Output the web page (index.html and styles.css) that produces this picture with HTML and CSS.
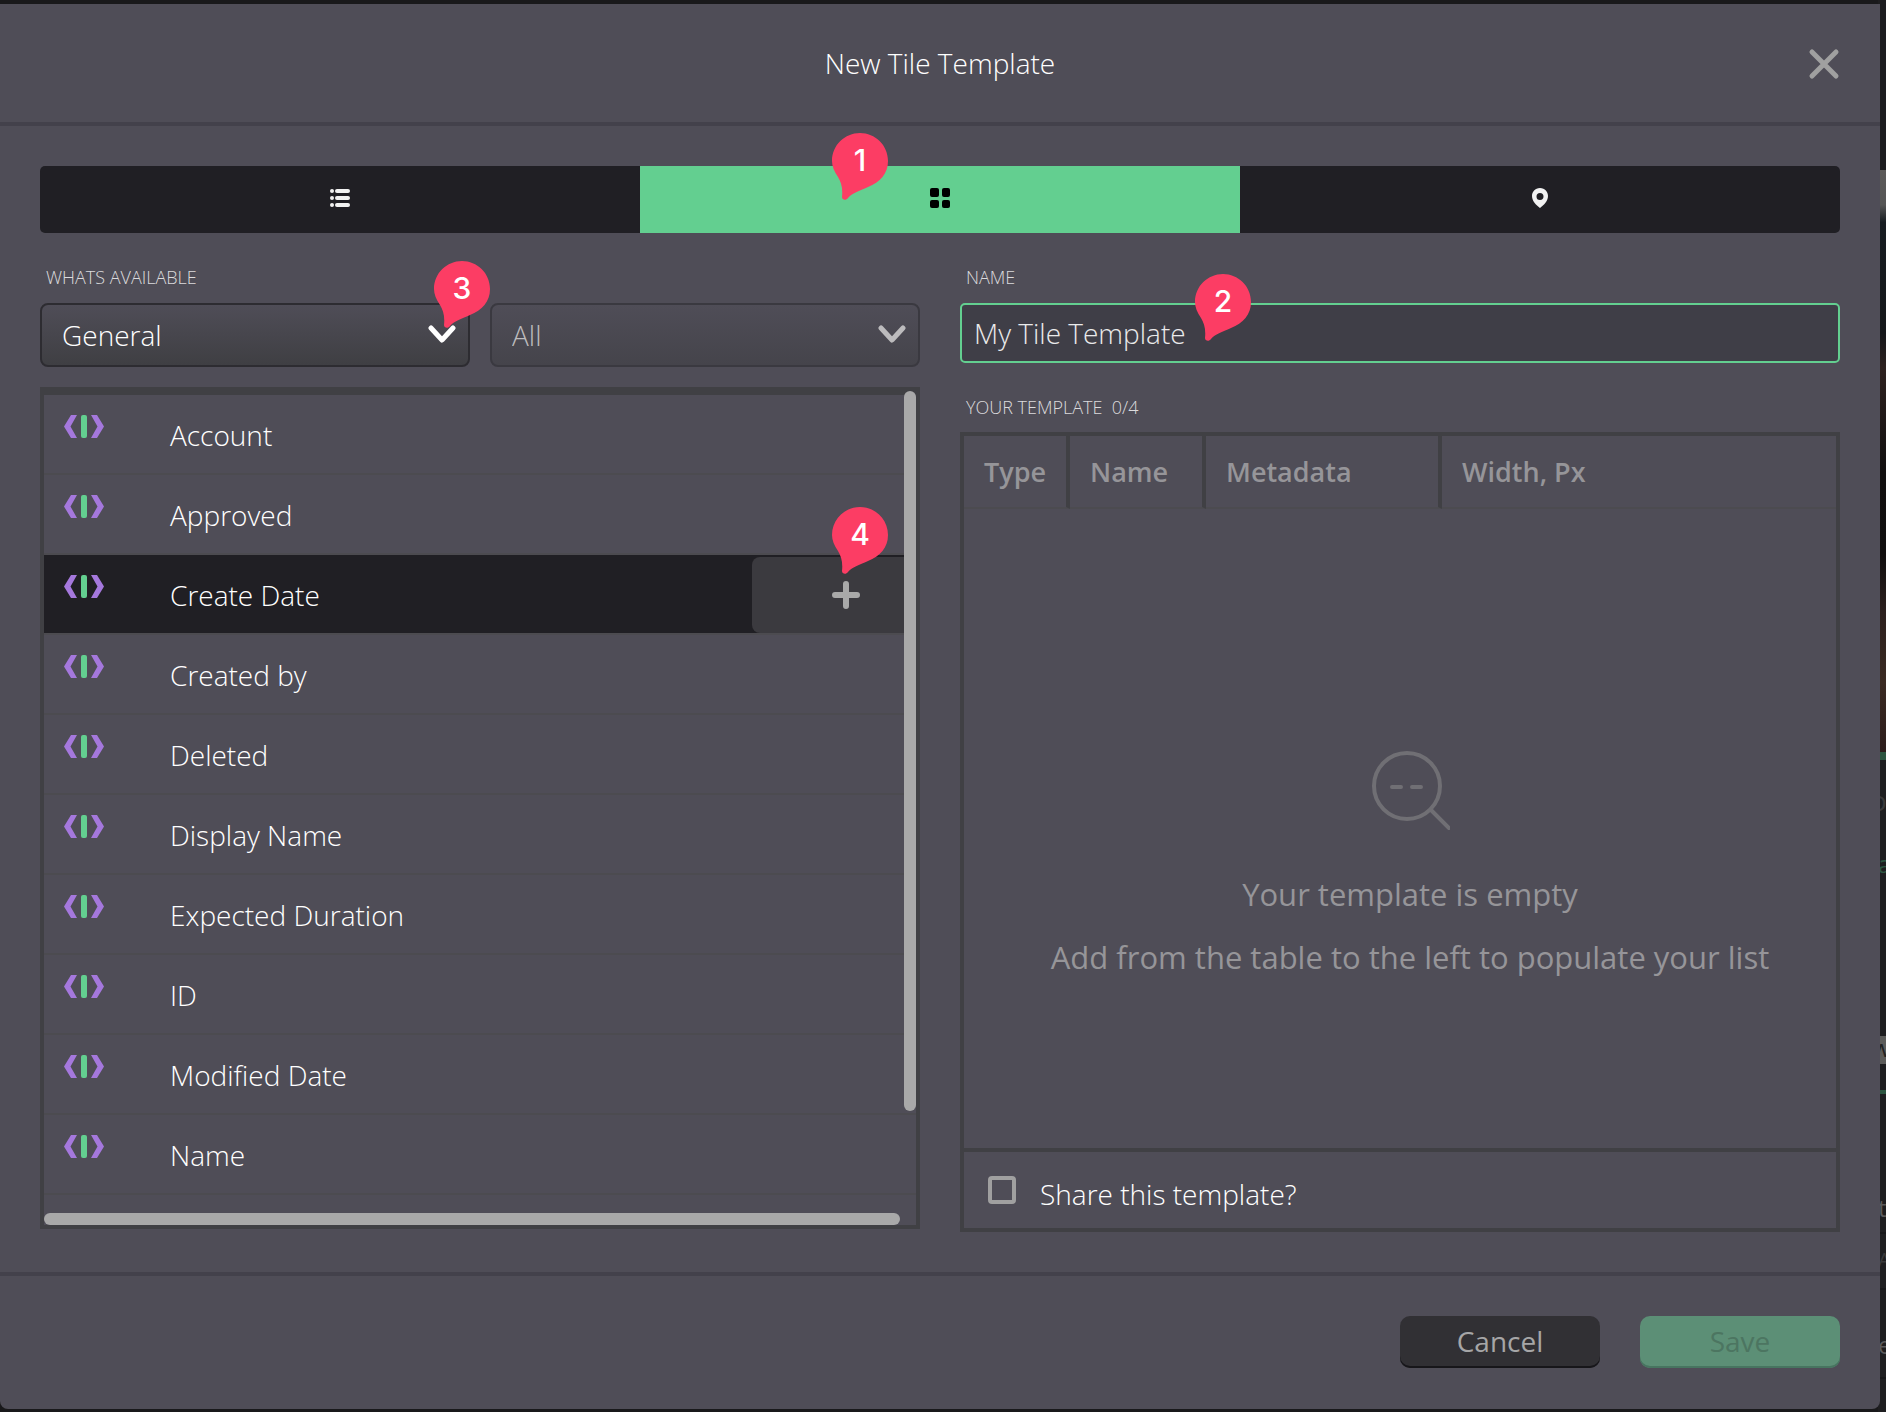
FILE: index.html
```
<!DOCTYPE html>
<html lang="en">
<head>
    <meta charset="utf-8">
    <title>New Tile Template</title>
    <link rel="stylesheet" href="styles.css">
</head>
<body>
    <!-- icons and callout shape used more than once -->
    <svg width="0" height="0" class="defs">
        <symbol id="icon-field" viewBox="0 0 40 23">
            <path d="M7 0h6L6.500 11.500 13 23H7L0 11.500z" fill="#a578dd"/>
            <path d="M33 0h-6l6.500 11.500L27 23h6l7-11.500z" fill="#a578dd"/>
            <rect x="17" y="0" width="6" height="23" rx="2" fill="#63cf90"/>
        </symbol>
        <symbol id="icon-chevron" viewBox="0 0 28 19">
            <path d="M3 3l11 12L25 3" fill="none" stroke="currentColor" stroke-width="5" stroke-linecap="round" stroke-linejoin="round"/>
        </symbol>
        <symbol id="callout" viewBox="0 0 56 67">
            <path d="M28 0C43 0 56 12 56 28c0 13-8 21-20 26-9 4-16 6-20 11-2 3-6 2-6-1 1-9-1-15-4-20C2 38 0 33 0 28 0 12 13 0 28 0z" fill="#fc3d64"/>
        </symbol>
    </svg>

    <!-- page behind the dialog -->
    <div class="backdrop" aria-hidden="true">
        <div class="backdrop-bar"></div>
        <div class="backdrop-photo"></div>
        <div class="backdrop-title">o</div>
        <div class="backdrop-link">a</div>
        <div class="backdrop-tab">w</div>
        <div class="backdrop-row first">t</div>
        <div class="backdrop-row head">A</div>
        <div class="backdrop-row">e</div>
    </div>

    <div class="modal">
        <header class="modal-header">
            <h1>New Tile Template</h1>
            <button type="button" class="close" aria-label="Close">
                <svg width="32" height="32" viewBox="0 0 32 32"><path d="M4 4l24 24M28 4L4 28" stroke="#a0a0a0" stroke-width="5" stroke-linecap="round"/></svg>
            </button>
        </header>

        <form class="modal-body" id="template-form">
            <div class="tabs">
                <button type="button" class="tab" aria-label="List">
                    <svg width="20" height="18" viewBox="0 0 20 18" fill="#f2f2f2">
                        <circle cx="2" cy="2" r="2"/><rect x="5" y="0" width="15" height="4" rx="2"/>
                        <circle cx="2" cy="9" r="2"/><rect x="5" y="7" width="15" height="4" rx="2"/>
                        <circle cx="2" cy="16" r="2"/><rect x="5" y="14" width="15" height="4" rx="2"/>
                    </svg>
                </button>
                <button type="button" class="tab active" aria-label="Tile">
                    <svg width="20" height="20" viewBox="0 0 20 20">
                        <rect width="9" height="9" rx="2"/><rect x="12" width="8" height="9" rx="2"/>
                        <rect y="12" width="9" height="8" rx="2"/><rect x="12" y="12" width="8" height="8" rx="2"/>
                    </svg>
                    <span class="callout callout-tab"><svg><use href="#callout"/></svg><b>1</b></span>
                </button>
                <button type="button" class="tab" aria-label="Map">
                    <svg width="18" height="20" viewBox="0 0 18 20">
                        <path fill="#f2f2f2" fill-rule="evenodd" d="M9 0c5 0 8 4 8 8 0 5-4 9-8 12C5 17 1 13 1 8c0-4 3-8 8-8zm0 5a3 3 0 1 0 0 7 3 3 0 0 0 0-7z"/>
                    </svg>
                </button>
            </div>

            <div class="columns">
                <section class="available">
                    <label class="caption" for="category">WHATS AVAILABLE</label>
                    <div class="filters">
                        <div class="select">
                            <select id="category"><option>General</option></select>
                            <svg class="chevron"><use href="#icon-chevron"/></svg>
                            <span class="callout callout-select"><svg><use href="#callout"/></svg><b>3</b></span>
                        </div>
                        <div class="select muted">
                            <select aria-label="Type"><option>All</option></select>
                            <svg class="chevron"><use href="#icon-chevron"/></svg>
                        </div>
                    </div>
                    <div class="field-box">
                        <ul class="fields">
                            <li><svg><use href="#icon-field"/></svg><span>Account</span></li>
                            <li><svg><use href="#icon-field"/></svg><span>Approved</span></li>
                            <li class="selected">
                                <svg><use href="#icon-field"/></svg><span>Create Date</span>
                                <button type="button" class="add" aria-label="Add Create Date">
                                    <svg viewBox="0 0 28 28"><path d="M14 3v22M3 14h22" stroke="#a9a9a9" stroke-width="6" stroke-linecap="round"/></svg>
                                    <span class="callout callout-add"><svg><use href="#callout"/></svg><b>4</b></span>
                                </button>
                            </li>
                            <li><svg><use href="#icon-field"/></svg><span>Created by</span></li>
                            <li><svg><use href="#icon-field"/></svg><span>Deleted</span></li>
                            <li><svg><use href="#icon-field"/></svg><span>Display Name</span></li>
                            <li><svg><use href="#icon-field"/></svg><span>Expected Duration</span></li>
                            <li><svg><use href="#icon-field"/></svg><span>ID</span></li>
                            <li><svg><use href="#icon-field"/></svg><span>Modified Date</span></li>
                            <li><svg><use href="#icon-field"/></svg><span>Name</span></li>
                        </ul>
                        <div class="scroll-y"></div>
                        <div class="scroll-x"></div>
                    </div>
                </section>

                <section class="template">
                    <label class="caption" for="name">NAME</label>
                    <div class="name-field">
                        <input type="text" id="name" name="name" value="My Tile Template">
                        <span class="callout callout-name"><svg><use href="#callout"/></svg><b>2</b></span>
                    </div>
                    <h2 class="caption">YOUR TEMPLATE&nbsp; 0/4</h2>
                    <div class="template-box">
                        <table>
                            <thead>
                                <tr>
                                    <th class="col-type">Type</th>
                                    <th class="col-name">Name</th>
                                    <th class="col-meta">Metadata</th>
                                    <th>Width, Px</th>
                                </tr>
                            </thead>
                        </table>
                        <div class="empty">
                            <svg width="80" height="80" viewBox="-2 0 80 80" fill="none" stroke="#706f74" stroke-width="4" stroke-linecap="round">
                                <circle cx="35" cy="35" r="33"/>
                                <path d="M59 59l18 18M20 36h9M40 36h9"/>
                            </svg>
                            <p>Your template is empty</p>
                            <p>Add from the table to the left to populate your list</p>
                        </div>
                        <div class="share">
                            <input type="checkbox" id="share" name="share">
                            <label for="share">Share this template?</label>
                        </div>
                    </div>
                </section>
            </div>
        </form>

        <footer class="modal-footer">
            <button type="button" class="btn btn-cancel">Cancel</button>
            <button type="submit" form="template-form" class="btn btn-save" disabled>Save</button>
        </footer>
    </div>
</body>
</html>
```
FILE: styles.css
```
* {
    box-sizing: border-box;
}
html, body {
    height: 100%;
}
body {
    margin: 0;
    padding: 4px 6px 3px 0;
    background: #19191b;
    color: #fff;
    font-family: "Open Sans", sans-serif;
    font-size: 28px;
    font-weight: 300;
    overflow: hidden;
}
button, input, select {
    font: inherit;
    color: inherit;
}
button {
    border: none;
    cursor: pointer;
}
.defs {
    position: absolute;
}

/* page behind the dialog */
.backdrop {
    position: absolute;
    top: 0;
    right: 0;
    width: 8px;
    height: 100%;
    display: flex;
    flex-direction: column;
    overflow: hidden;
    background: #1e1e20;
    color: #5a5a5b;
    font-size: 24px;
    font-weight: 400;
}
.backdrop-bar {
    height: 170px;
    background: #1d1d1f;
}
.backdrop-photo {
    height: 590px;
    background: linear-gradient(#5c5a59 0, #555 6%, #171c21 9%, #15171a 28%, #2d211f 34%, #110f0f 52%, #100e0e 66%, #2c201e 76%, #3a2a22 88%, #2c1c1b 100%);
    border-bottom: 8px solid #2c5540;
}
.backdrop-title {
    margin-left: -8px;
    height: 76px;
    line-height: 80px;
    font-size: 28px;
    color: #39393a;
}
.backdrop-link {
    height: 200px;
    line-height: 56px;
    color: #2c5540;
}
.backdrop-tab {
    height: 28px;
    line-height: 24px;
    margin-left: -6px;
    background: #5c5c5a;
    color: #222;
}
.backdrop-row {
    height: 89px;
    line-height: 110px;
    border-bottom: 2px solid #171719;
}
.backdrop-row.first {
    height: 144px;
    margin-top: 26px;
    line-height: 228px;
    border-top: 4px solid #2c5540;
}
.backdrop-row.head {
    height: 56px;
    line-height: 52px;
    font-size: 20px;
    color: #39393a;
}

.modal {
    position: relative;
    display: flex;
    flex-direction: column;
    height: 100%;
    background: #4f4d57;
    border-radius: 0 0 8px 8px;
}
.modal-header {
    position: relative;
    height: 122px;
    border-bottom: 4px solid #43414b;
    display: flex;
    align-items: center;
    justify-content: center;
}
h1 {
    margin: 0;
    font-size: 28px;
    font-weight: 300;
}
.close {
    position: absolute;
    right: 40px;
    padding: 2px 0 0;
    background: none;
    display: flex;
}
.modal-body {
    flex: 1;
    display: flex;
    flex-direction: column;
    padding: 40px;
}

.tabs {
    display: flex;
    height: 67px;
}
.tab {
    position: relative;
    flex: 1;
    display: flex;
    align-items: center;
    justify-content: center;
    padding: 0 0 3px;
    background: #201f24;
}
.tab:first-child {
    border-radius: 5px 0 0 5px;
}
.tab:last-child {
    border-radius: 0 5px 5px 0;
}
.tab.active {
    background: #63cf90;
}

.columns {
    flex: 1;
    display: grid;
    grid-template-columns: 1fr 1fr;
    gap: 40px;
    padding-top: 29px;
}
.available, .template {
    display: flex;
    flex-direction: column;
}
.caption {
    margin: 0 0 11px 6px;
    font-size: 18px;
    font-weight: 300;
    line-height: 30px;
    color: #dcdbdd;
}

.filters {
    display: flex;
    gap: 20px;
    margin-bottom: 20px;
}
.select {
    position: relative;
    flex: 1;
}
.select select {
    appearance: none;
    display: block;
    width: 100%;
    height: 64px;
    padding: 0 20px;
    border: 2px solid #2d2c31;
    border-radius: 8px;
    background: linear-gradient(#4f4d57, #3f3f43);
}
.select.muted {
    color: #bcbbbd;
}
.muted select {
    border-color: #3a3940;
    background: linear-gradient(#4f4d57, #45444b);
}
.chevron {
    position: absolute;
    top: 22px;
    right: 14px;
    width: 28px;
    height: 19px;
    pointer-events: none;
}

.field-box {
    position: relative;
    flex: 1;
    margin-bottom: 3px;
    border: 4px solid #404044;
    border-top-width: 8px;
}
.fields {
    margin: 0;
    padding: 0;
    list-style: none;
}
.fields li {
    position: relative;
    display: flex;
    height: 80px;
    padding-left: 20px;
    border-bottom: 2px solid #4c4b50;
}
.fields li > svg {
    width: 40px;
    height: 23px;
    margin-top: 20px;
}
.fields li > span {
    margin-left: 66px;
    line-height: 80px;
}
.fields .selected {
    background: #201f24;
    background-clip: padding-box;
}
.add {
    position: relative;
    width: 164px;
    height: 76px;
    margin: 2px 0 0 auto;
    padding: 0;
    border-radius: 8px 0 0 8px;
    background: #3b3a3f;
    display: flex;
    align-items: center;
    justify-content: center;
}
.add > svg {
    width: 28px;
    height: 28px;
    margin-left: 24px;
}
.scroll-y, .scroll-x {
    position: absolute;
    border-radius: 6px;
    background: #a9a9a9;
}
.scroll-y {
    top: -4px;
    right: 0;
    width: 12px;
    height: 720px;
}
.scroll-x {
    left: 0;
    right: 16px;
    bottom: 0;
    height: 12px;
}

.name-field {
    position: relative;
    margin-bottom: 29px;
}
.name-field input {
    display: block;
    width: 100%;
    height: 60px;
    padding: 0 12px;
    border: 2px solid #63cf90;
    border-radius: 5px;
    outline: none;
    background: #3f3e47;
    color: #eaeaeb;
}
.template-box {
    flex: 1;
    display: flex;
    flex-direction: column;
    margin-top: -1px;
    border: 4px solid #404044;
}
table {
    width: 100%;
    border-collapse: separate;
    border-spacing: 0;
    table-layout: fixed;
}
th {
    height: 73px;
    padding: 0 0 0 20px;
    border-bottom: 2px solid #4c4b50;
    border-right: 4px solid #404044;
    color: #969599;
    font-size: 27px;
    font-weight: 600;
    text-align: left;
}
th:last-child {
    border-right: none;
}
.col-type {
    width: 106px;
}
.col-name {
    width: 136px;
}
.col-meta {
    width: 236px;
}
.empty {
    flex: 1;
    display: flex;
    flex-direction: column;
    align-items: center;
    justify-content: center;
    padding: 82px 0 0 20px;
    color: #969599;
    font-size: 31px;
    font-weight: 400;
}
.empty svg {
    margin-bottom: 32px;
}
.empty p {
    margin: 0;
    line-height: 63px;
}
.share {
    display: flex;
    align-items: center;
    height: 80px;
    padding: 0 24px;
    border-top: 4px solid #404044;
}
.share input {
    appearance: none;
    width: 28px;
    height: 28px;
    margin: 0 24px 0 0;
    border: 4px solid #a0a0a0;
    border-radius: 4px;
}
.share label {
    padding-top: 8px;
}

.modal-footer {
    display: flex;
    justify-content: flex-end;
    gap: 40px;
    padding: 40px 40px 41px;
    border-top: 4px solid #43414b;
}
.btn {
    width: 200px;
    height: 52px;
    border-radius: 10px;
    font-weight: 400;
    line-height: 50px;
    padding: 0 0 2px;
}
.btn-cancel {
    background: #313034;
    color: #a6a6a7;
    box-shadow: inset 0 -2px #17161a;
}
.btn-save {
    background: #5c8f76;
    color: #4c7561;
    box-shadow: inset 0 -2px #477560;
}

/* numbered callouts */
.callout {
    position: absolute;
    z-index: 1;
    width: 56px;
    height: 67px;
    color: #fff;
    pointer-events: none;
}
.callout svg {
    display: block;
    width: 56px;
    height: 67px;
}
.callout b {
    position: absolute;
    top: 0;
    left: 0;
    width: 56px;
    font-family: Inter, sans-serif;
    font-size: 30px;
    font-weight: 500;
    line-height: 54px;
    text-align: center;
}
.callout-tab {
    top: -33px;
    left: 192px;
}
.callout-select {
    top: -42px;
    right: -20px;
}
.callout-name {
    top: -29px;
    left: 235px;
}
.callout-add {
    top: -50px;
    left: 80px;
}
```
